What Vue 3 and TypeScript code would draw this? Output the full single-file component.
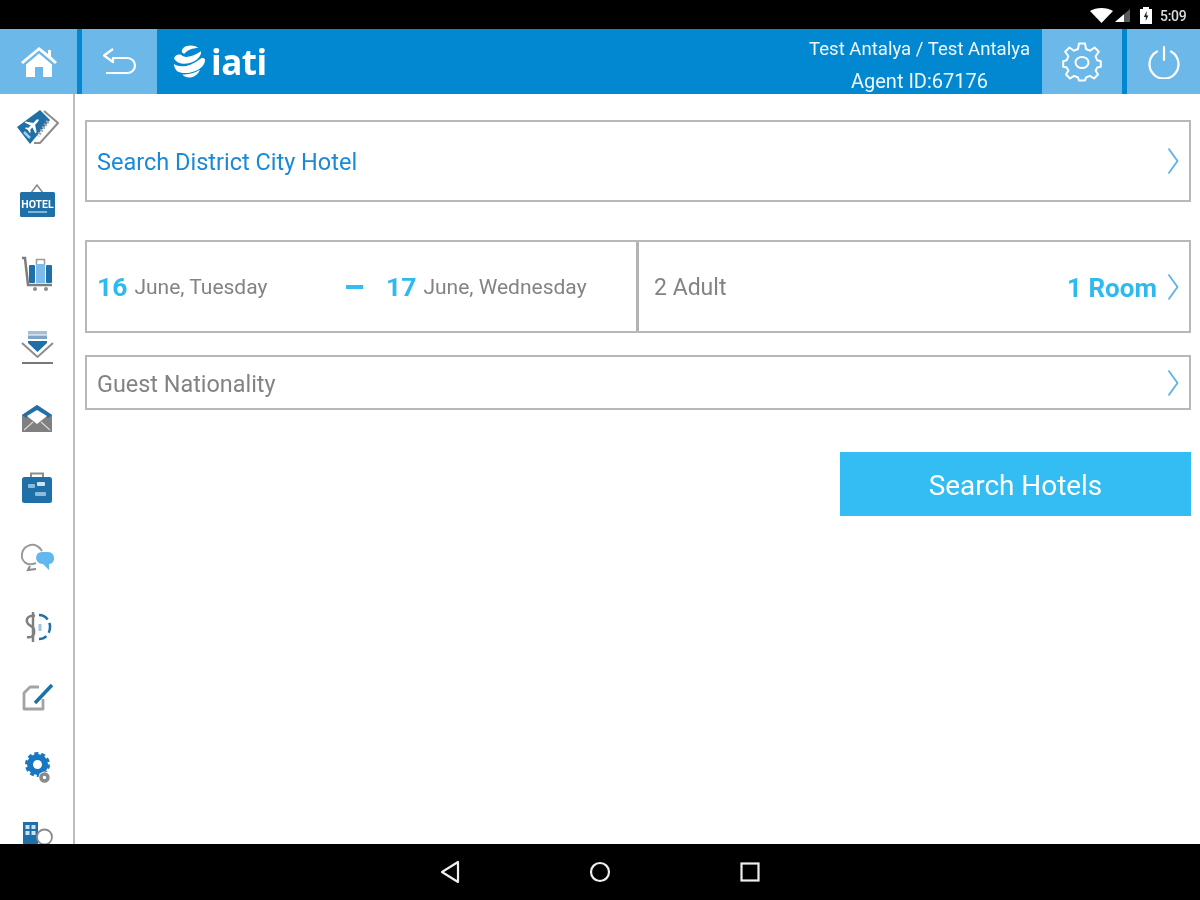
<script setup lang="ts">
const firstBoxLabel = "Search District City Hotel";
</script>

<template>
  <div class="screen">
    <div class="status">
      <svg class="wifi" viewBox="0 0 23 15" width="23" height="15"><path d="M0 3C6-1 17-1 23 3L11.500 15Z" fill="#fff" /></svg>
      <svg class="signal" viewBox="0 0 15 13" width="15" height="13"><path d="M0 13L15 0V13Z" fill="#5a5a5a" /><path d="M0 13L9 5.200V13Z" fill="#fff" /></svg>
      <svg class="battery" viewBox="0 0 12 17" width="12" height="17"><path d="M0 2H3V0H9V2H12V17H0Z" fill="#fff" /><path d="M6.800 4L3.800 10H5.800V14L8.400 8.500H6.500Z" fill="#222" /></svg>
      <span class="clock">5:09</span>
    </div>

    <header class="topbar">
      <div class="tab tab-home">
        <svg viewBox="0 0 36 30" width="36" height="30" fill="#fff">
          <path d="M18 0L27 7V3H30V9.500L36 15L34 17L18 3.500L2 17L0 15Z" />
          <path d="M18 6.500L31 17.500V30H22V20H14V30H5V17.500Z" />
        </svg>
      </div>
      <div class="tab tab-back">
        <svg viewBox="0 0 36 30" width="36" height="30" fill="none" stroke="#fff" stroke-width="2.200">
          <path d="M11 2L2 8.500L11 15V11H25.500A7.500 7.500 0 0 1 25.500 26H4" stroke-linejoin="round" />
        </svg>
      </div>
      <div class="logo">
        <svg viewBox="0 0 32 32" width="33" height="33" fill="#fff">
          <path d="M13 1C17 0 22 .5 24.500 3C19 3 14 5 11 8.500C7 8 8 3 13 1Z" />
          <path d="M1 13C2 9 7 8 9 10.500C12 13 20 11 27 6C28 9 25 14 19 16.500C12 19.500 4 18.500 1 13Z" />
          <path d="M1 18.500C7 22.500 17 21 27 13C32 11 32 16 29 20C23 27 10 29 4 25.500C2 23.500 1 21 1 18.500Z" />
          <path d="M9 28.500C15 29 21 27 26 24C25 28 20 32 16 31.500C13 31.500 10.500 30 9 28.500Z" />
        </svg>
        <span class="logo-text">iati</span>
      </div>
      <div class="agent">
        <div>Test Antalya / Test Antalya</div>
        <div class="agent-id">Agent ID:67176</div>
      </div>
      <div class="tab tab-gear">
        <svg viewBox="0 0 40 40" width="40" height="40" fill="none" stroke="#fff" stroke-width="2" stroke-linejoin="round">
          <path d="M17 2H23L24 7.500L28 9.200L32.600 6L36.800 10.200L33.600 14.800L35.300 18.800L38.800 19.800V25.200L35.300 26L33.600 29L36 33L32 37L28 34.400L24 36L23 39H17L16 36L12 34.400L8 37L4 33L6.400 29L4.700 26L1.200 25.200V19.800L4.700 18.800L6.400 14.800L3.200 10.200L7.400 6L12 9.200L16 7.500Z" transform="translate(0 -.5)" />
          <ellipse cx="20" cy="20.500" rx="6.500" ry="5.500" />
        </svg>
      </div>
      <div class="tab tab-power">
        <svg viewBox="0 0 34 34" width="34" height="34" fill="none" stroke="#fff" stroke-width="2.200" stroke-linecap="round">
          <path d="M17 2V15" />
          <path d="M10 6.500A14.500 14.500 0 1 0 24 6.500" />
        </svg>
      </div>
    </header>

    <div class="body">
      <aside class="sidebar">
        <div class="side-item">
          <svg class="ticket" viewBox="0 0 42 36" width="42" height="36">
            <path d="M0 18L23 1L33 11L13 35Z" fill="#1f70a8" />
            <path d="M27 2L41 14L23 34L17 34" fill="none" stroke="#8d8d8d" stroke-width="2" />
            <path d="M31 12L21 27" stroke="#a9a9a9" stroke-width="3.500" stroke-dasharray="2 1.500" />
            <path d="M0-9C1-9 1.500-8 1.500-6V-2L9 3V5L1.500 2.500V6L4 8V9.500L0 8.500L-4 9.500V8L-1.500 6V2.500L-9 5V3L-1.500-2V-6C-1.500-8-1-9 0-9Z" transform="translate(16 16) rotate(45) scale(.85)" fill="#fff" />
            <path d="M7 23L13 29" stroke="#a8cde6" stroke-width="2.500" />
          </svg>
        </div>
        <div class="side-item">
          <svg viewBox="0 0 36 36" width="36" height="36">
            <path d="M12 11L18 3L24 11" fill="none" stroke="#8a8a8a" stroke-width="1.500" />
            <rect x="1" y="10" width="35" height="25" rx="1.500" fill="#1f70a8" />
            <text x="18.500" y="26" text-anchor="middle" class="hotel-text">HOTEL</text>
            <path d="M9 30H28" stroke="#a8cde6" stroke-width="1.500" />
          </svg>
        </div>
        <div class="side-item">
          <svg viewBox="0 0 36 36" width="36" height="36">
            <path d="M3 2H6L9 29H33" fill="none" stroke="#7d7d7d" stroke-width="2.500" />
            <circle cx="16" cy="33" r="2" fill="#8d8d8d" />
            <circle cx="27" cy="33" r="2" fill="#8d8d8d" />
            <path d="M17.500 9V3.500H25.500V9" fill="none" stroke="#9a9a9a" stroke-width="1.500" />
            <rect x="10" y="9" width="6" height="18" rx="1" fill="#1f70a8" />
            <rect x="17" y="8" width="9" height="19" fill="#7bbcea" />
            <rect x="27" y="9" width="6" height="18" rx="1" fill="#1f70a8" />
          </svg>
        </div>
        <div class="side-item">
          <svg viewBox="0 0 36 36" width="36" height="36">
            <rect x="9" y="3" width="19" height="3.500" fill="#a6bfd8" />
            <rect x="9" y="7.500" width="19" height="3.500" fill="#7ca5c8" />
            <path d="M9 13H28V15L18.500 24L9 15Z" fill="#1f70a8" />
            <path d="M3 15L18.500 29L34 15" fill="none" stroke="#8d8d8d" stroke-width="2" />
            <path d="M3 35H34" stroke="#777" stroke-width="2" />
          </svg>
        </div>
        <div class="side-item">
          <svg viewBox="0 0 36 36" width="36" height="36">
            <path d="M3 15L18 5L33 15V32H3Z" fill="#808080" />
            <path d="M3 15L18 5L33 15L29 18L18 11L7 18Z" fill="#1f70a8" />
            <path d="M8 16L18 10L28 16L18 24Z" fill="#fff" />
            <path d="M5 30L14 22M31 30L22 22" stroke="#d6d6d6" stroke-width="1.200" />
          </svg>
        </div>
        <div class="side-item">
          <svg viewBox="0 0 36 36" width="36" height="36">
            <path d="M12 7V3.500H24V7" fill="none" stroke="#8d8d8d" stroke-width="2" />
            <rect x="3" y="7" width="30" height="26" rx="2.500" fill="#1f70a8" />
            <rect x="9" y="14" width="7" height="4" rx="1" fill="#8cbbdc" />
            <rect x="18" y="12" width="8" height="4" rx="1" fill="#cfe2f1" />
            <rect x="16" y="22" width="11" height="4" rx="1" fill="#8cbbdc" />
          </svg>
        </div>
        <div class="side-item">
          <svg viewBox="0 0 36 36" width="36" height="36">
            <path d="M17 25C8 29 2 23 3 16C4 8 13 5 18 8C20 9 22 11 23 13" fill="none" stroke="#9a9a9a" stroke-width="2" />
            <path d="M11 28L9 32L17 31" fill="none" stroke="#8a8a8a" stroke-width="2" />
            <path d="M23 14H29C37 14 37 26 30 26V32L24 26C15 26 15 14 23 14Z" fill="#61b8ef" />
          </svg>
        </div>
        <div class="side-item">
          <svg viewBox="0 0 36 36" width="36" height="36" fill="none" stroke-width="2.500">
            <path d="M16 7C10 6 7 9 8 13C9 17 15 17 15 21C16 27 12 29 8 28" stroke="#808080" />
            <path d="M14 3V33" stroke="#808080" />
            <path d="M20 6C27 6 31 12 31 18C31 24 27 30 20 30" stroke="#1f70a8" stroke-dasharray="10 4" />
            <path d="M21 15V22" stroke="#9dc5e2" stroke-width="3" />
          </svg>
        </div>
        <div class="side-item">
          <svg viewBox="0 0 36 36" width="36" height="36" fill="none">
            <path d="M20 8H11L5 14V30H24V20" stroke="#a3a3a3" stroke-width="2.800" stroke-linejoin="round" />
            <path d="M16 24L33 6" stroke="#1f70a8" stroke-width="3.500" />
          </svg>
        </div>
        <div class="side-item">
          <svg viewBox="0 0 36 36" width="36" height="36" fill="none">
            <circle cx="18.500" cy="15.500" r="7.500" stroke="#1877c2" stroke-width="6" />
            <circle cx="18.500" cy="15.500" r="11" stroke="#1877c2" stroke-width="3" stroke-dasharray="4 2.910" />
            <circle cx="25.500" cy="28.500" r="6" fill="#fff" />
            <circle cx="25.500" cy="28.500" r="3.500" stroke="#8a8a8a" stroke-width="3.500" />
          </svg>
        </div>
        <div class="side-item">
          <svg viewBox="0 0 36 36" width="36" height="36">
            <rect x="4" y="3" width="15" height="30" fill="#1f70a8" />
            <rect x="6.500" y="6" width="4" height="4" fill="#cfe2f1" />
            <rect x="12.500" y="6" width="4" height="4" fill="#cfe2f1" />
            <rect x="6.500" y="12" width="4" height="4" fill="#cfe2f1" />
            <rect x="12.500" y="12" width="4" height="4" fill="#cfe2f1" />
            <circle cx="25.500" cy="18" r="7.500" fill="#fff" stroke="#8a8a8a" stroke-width="1.800" />
          </svg>
        </div>
      </aside>

      <main class="content">
        <div class="box box-search">
          <span class="search-label">{{ firstBoxLabel }}</span>
          <svg class="chevron" viewBox="0 0 12 28" width="12" height="28"><path d="M1.500 1.500L10.500 14L1.500 26.500" /></svg>
        </div>

        <div class="box box-dates">
          <div class="dates">
            <div class="date date-in"><b>16</b><span>June, Tuesday</span></div>
            <i class="dash"></i>
            <div class="date date-out"><b>17</b><span>June, Wednesday</span></div>
          </div>
          <div class="guests">
            <span class="adults">2 Adult</span>
            <b class="rooms">1 Room</b>
            <svg class="chevron" viewBox="0 0 12 28" width="12" height="28"><path d="M1.500 1.500L10.500 14L1.500 26.500" /></svg>
          </div>
        </div>

        <div class="box box-nation">
          <span class="nation-label">Guest Nationality</span>
          <svg class="chevron" viewBox="0 0 12 28" width="12" height="28"><path d="M1.500 1.500L10.500 14L1.500 26.500" /></svg>
        </div>

        <button class="search-btn" type="button">Search Hotels</button>
      </main>
    </div>

    <footer class="navbar">
      <svg viewBox="0 0 20 24" width="20" height="24" fill="none" stroke="#eee" stroke-width="2.200" stroke-linejoin="round"><path d="M18 2V22L2 12Z" /></svg>
      <svg viewBox="0 0 22 22" width="22" height="22" fill="none" stroke="#eee" stroke-width="2.200"><circle cx="11" cy="11" r="9" /></svg>
      <svg viewBox="0 0 20 20" width="20" height="20" fill="none" stroke="#eee" stroke-width="2.200"><rect x="1.500" y="1.500" width="17" height="17" /></svg>
    </footer>
  </div>
</template>

<style scoped>
.screen {
  width: 1200px;
  height: 900px;
  display: flex;
  flex-direction: column;
  overflow: hidden;
  background: #fff;
  font-family: Roboto, "Liberation Sans", sans-serif;
  color: #808080;
  filter: blur(0.5px);
}

.status {
  height: 29px;
  flex: none;
  background: #000;
  display: flex;
  align-items: center;
  justify-content: flex-end;
  padding: 2px 10px 0 0;
  box-sizing: border-box;
}
.wifi {
  margin-right: 2px;
}
.signal {
  margin-right: 10px;
}
.battery {
  margin-right: 8px;
}
.clock {
  color: #ddd;
  font-size: 14px;
  font-weight: 500;
  width: 30px;
  letter-spacing: -.3px;
}

.topbar {
  height: 65px;
  flex: none;
  background: #0288d1;
  display: flex;
  align-items: stretch;
}
.tab {
  background: #6cb8e8;
  display: flex;
  align-items: center;
  justify-content: center;
}
.tab-home {
  width: 77px;
  margin-right: 5px;
}
.tab-back {
  width: 75px;
}
.tab-gear {
  width: 80px;
  margin-right: 5px;
}
.tab-power {
  width: 73px;
}

.logo {
  display: flex;
  align-items: center;
  margin-left: 16px;
  flex: 1;
  color: #fff;
}
.logo-text {
  font-size: 35px;
  font-weight: 700;
  line-height: 1;
  margin-left: 5px;
  letter-spacing: -.5px;
  font-family: "Open Sans", sans-serif;
}

.agent {
  width: 240px;
  padding-right: 12px;
  color: #eef7fd;
  font-size: 18.600px;
  text-align: right;
  line-height: 32px;
  box-sizing: border-box;
  white-space: nowrap;
  padding-top: 4px;
}
.agent-id {
  padding-right: 42px;
  font-size: 20px;
  line-height: 33px;
}

.body {
  height: 750px;
  flex: none;
  display: flex;
}
.sidebar {
  width: 75px;
  flex: none;
  box-sizing: border-box;
  border-right: 2px solid #bdbdbd;
  overflow: hidden;
}
.side-item {
  box-sizing: border-box;
  padding: 15px 0 0 19px;
  height: 70px;
}
.side-item:nth-child(1) { height: 73px; }
.side-item:nth-child(2) { height: 74px; }
.side-item:nth-child(3) { height: 72px; }
.side-item:nth-child(4) { height: 72px; }
.side-item:nth-child(6) { height: 68px; }
.side-item:nth-child(7) { height: 71px; }
.ticket {
  margin-left: -2px;
}
.hotel-text {
  font-size: 10.500px;
  font-weight: 700;
  fill: #fff;
}

.content {
  flex: 1;
  padding: 26px 9px 0 10px;
  display: flex;
  flex-direction: column;
}
.box {
  border: 2px solid #b8b8b8;
  box-sizing: border-box;
  display: flex;
  align-items: center;
  padding: 0 10px;
}
.box-search {
  height: 82px;
  justify-content: space-between;
  font-size: 23.500px;
  color: #1a8ad6;
}
.box-dates {
  height: 93px;
  margin-top: 38px;
  padding: 0;
}
.box-nation {
  height: 55px;
  margin-top: 22px;
  justify-content: space-between;
  font-size: 23.400px;
}
.search-label,
.nation-label,
.adults {
  padding-top: 2px;
}
.nation-label {
  color: #838383;
}

.chevron {
  flex: none;
  fill: none;
  stroke: #5cb3e8;
  stroke-width: 1.800;
}

.dates {
  width: 552px;
  height: 100%;
  display: flex;
  align-items: center;
  box-sizing: border-box;
  padding-left: 10px;
  border-right: 3px solid #b4b4b4;
  flex: none;
}
.date {
  display: flex;
  align-items: center;
  font-size: 21px;
  color: #838383;
}
.date b,
.rooms {
  color: #2cbaf0;
  font-weight: 700;
  font-size: 26.500px;
}
.date span {
  margin-left: 7px;
}
.date-in {
  width: 249px;
}
.dash {
  width: 17px;
  height: 4px;
  background: #35bdf0;
  margin-right: 23px;
}

.guests {
  flex: 1;
  display: flex;
  align-items: center;
  padding: 0 10px 0 15px;
}
.adults {
  font-size: 23px;
  color: #838383;
  flex: 1;
}
.rooms {
  margin-right: 10px;
  font-size: 26px;
  padding-top: 2px;
}

.search-btn {
  align-self: flex-end;
  width: 351px;
  height: 64px;
  margin-top: 42px;
  border: 0;
  background: #33bdf2;
  color: #fff;
  font-family: inherit;
  font-size: 27.900px;
  padding: 2px 0 0;
}

.navbar {
  height: 56px;
  flex: none;
  background: #000;
  display: flex;
  align-items: center;
  justify-content: center;
  gap: 129px;
}
</style>
